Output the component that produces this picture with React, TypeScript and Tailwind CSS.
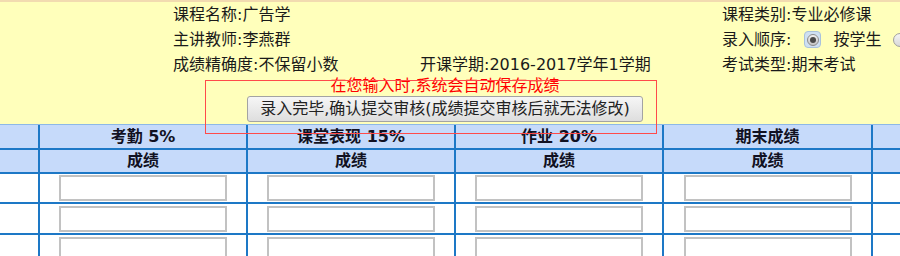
import React from "react";

const font = { fontFamily: '"DejaVu Sans", "Noto Sans CJK SC", sans-serif' };

function CheckedRadio() {
  return (
    <span className="inline-flex items-center justify-center w-[17px] h-[17px] rounded-[4px] bg-[#cfe0f2] border border-[#a9c2dc]">
      <span className="flex items-center justify-center w-[12px] h-[12px] rounded-full bg-gradient-to-b from-[#f2f2f2] to-[#c4c4c4] border border-[#8c8c8c]">
        <span className="w-[6px] h-[6px] rounded-full bg-[#4a4a4a]" />
      </span>
    </span>
  );
}

function EmptyRadio() {
  return (
    <span className="inline-block shrink-0 w-[14px] h-[14px] rounded-full bg-gradient-to-b from-[#f4f4f4] to-[#d8d8d8] border border-[#a0a0a0]" />
  );
}

function HeaderCell({ children }: { children?: React.ReactNode }) {
  return (
    <div className="bg-[#c6dafa] flex items-center justify-center font-bold text-[#111122] leading-none">
      {children}
    </div>
  );
}

function BodyCell({ input }: { input?: boolean }) {
  return (
    <div className="bg-white flex items-center justify-center">
      {input ? (
        <div className="w-[168px] h-[26px] bg-white border-2 border-[#c2c2c2]" />
      ) : null}
    </div>
  );
}

export default function App() {
  const headers = ["考勤 5%", "课堂表现 15%", "作业 20%", "期末成绩"];
  const rows = [0, 1, 2];
  return (
    <div
      className="relative w-[900px] h-[256px] overflow-hidden bg-white text-[16px] text-[#1a1a1a]"
      style={font}
    >
      {/* yellow info section */}
      <div className="h-[124px] bg-[#ffffbb] border-t-[2px] border-[#f2dbb0]">
        <div className="grid grid-cols-[173px_247px_302px_1fr] auto-rows-[25px] items-center leading-none whitespace-nowrap">
          <div />
          <div>课程名称:广告学</div>
          <div />
          <div>课程类别:专业必修课</div>

          <div />
          <div>主讲教师:李燕群</div>
          <div />
          <div className="flex items-center">
            <span>录入顺序:</span>
            <span className="ml-[13px] flex">
              <CheckedRadio />
            </span>
            <span className="ml-[12px]">按学生</span>
            <span className="ml-[12px] flex">
              <EmptyRadio />
            </span>
          </div>

          <div />
          <div>成绩精确度:不保留小数</div>
          <div>开课学期:2016-2017学年1学期</div>
          <div>考试类型:期末考试</div>
        </div>
        <div className="flex flex-col items-center pr-[10px] mt-[-1px]">
          <div className="text-[#ff0000] leading-[20px] whitespace-nowrap">
            在您输入时,系统会自动保存成绩
          </div>
          <button className="h-[26px] w-[396px] rounded-[3px] border border-[#a3a3a3] bg-gradient-to-b from-[#f6f6f6] to-[#dedede] text-[#222] leading-none whitespace-nowrap">
            录入完毕,确认提交审核(成绩提交审核后就无法修改)
          </button>
        </div>
      </div>

      {/* table */}
      <div className="grid grid-cols-[38px_206px_206px_206px_207px_1fr] grid-rows-[23px_22px_28px_29px_30px] gap-[2px] bg-[#1d78c6] border-t border-[#8db8e6]">
        <HeaderCell />
        {headers.map((h) => (
          <HeaderCell key={h}>{h}</HeaderCell>
        ))}
        <HeaderCell />

        <HeaderCell />
        {headers.map((h) => (
          <HeaderCell key={h + "-s"}>成绩</HeaderCell>
        ))}
        <HeaderCell />

        {rows.map((r) => (
          <React.Fragment key={r}>
            <BodyCell />
            <BodyCell input />
            <BodyCell input />
            <BodyCell input />
            <BodyCell input />
            <BodyCell />
          </React.Fragment>
        ))}
      </div>

      {/* red outline box */}
      <div className="absolute left-[205px] top-[80px] w-[452px] h-[54px] border border-[#ff4a4a] pointer-events-none" />
    </div>
  );
}
